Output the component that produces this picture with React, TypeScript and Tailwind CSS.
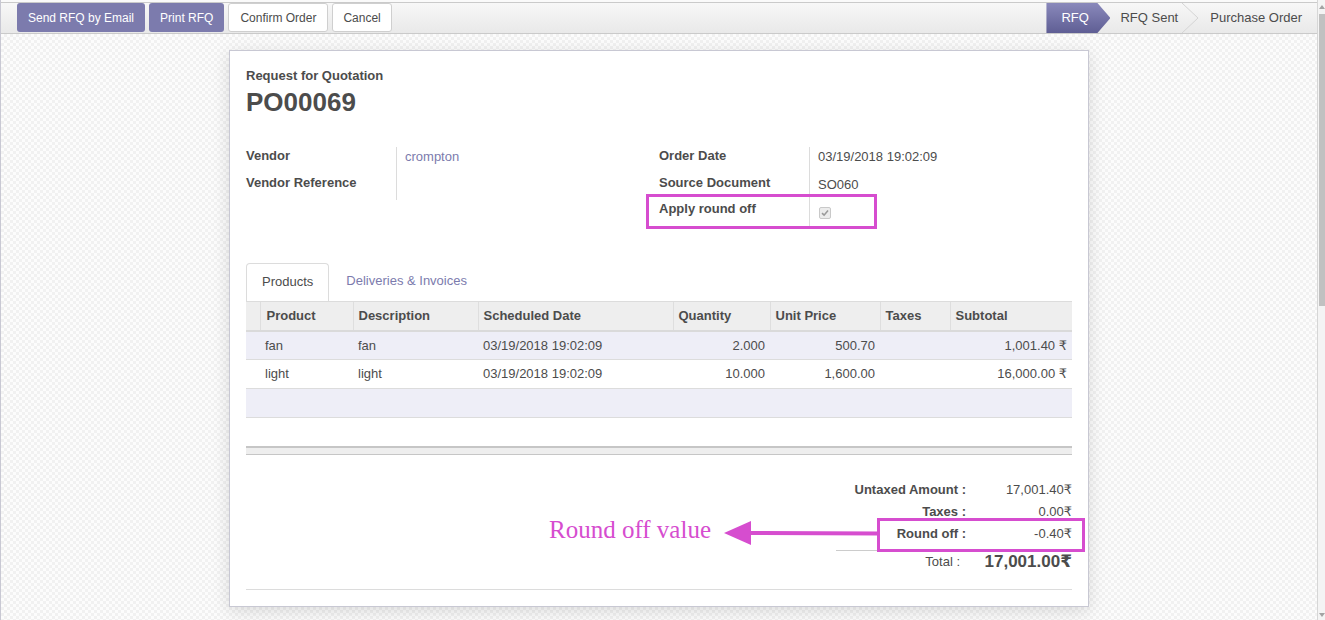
import React from "react";

const MAGENTA = "#d64dcf";

function TopBar() {
  return (
    <div className="h-[34px] flex flex-col">
      <div className="h-[2px] bg-[#fafafa]" />
      <div className="h-[32px] border-t border-b border-[#cacaca] bg-linear-to-b from-[#f7f7f7] to-[#e9e9e9] flex items-start justify-between">
        <div className="flex gap-[4px] pl-[16px] pt-0">
          <button className="h-[29px] px-[11px] rounded-[3px] bg-[#7c7bad] text-white text-[12px] leading-[30px]">
            Send RFQ by Email
          </button>
          <button className="h-[29px] px-[11px] rounded-[3px] bg-[#7c7bad] text-white text-[12px] leading-[30px]">
            Print RFQ
          </button>
          <button className="h-[29px] px-[11px] rounded-[3px] bg-white border border-[#cfcfcf] text-[#4c4c4c] text-[12px] leading-[28px]">
            Confirm Order
          </button>
          <button className="h-[29px] px-[10px] rounded-[3px] bg-white border border-[#cfcfcf] text-[#4c4c4c] text-[12px] leading-[28px]">
            Cancel
          </button>
        </div>
        <div className="flex h-[30px] items-stretch">
          <div className="w-[64px] bg-linear-to-b from-[#8a89bb] to-[#5f5e94] text-white text-[13px] leading-[30px] pl-[15px] [clip-path:polygon(0_0,51px_0,64px_50%,51px_100%,0_100%)]">
            RFQ
          </div>
          <div className="pl-[10px] pr-[2px] text-[13px] leading-[30px] text-[#4c4c4c]">RFQ Sent</div>
          <svg width="20" height="30" viewBox="0 0 20 30" className="block">
            <polyline points="2,0 18,15 2,30" fill="none" stroke="#d4d4d4" strokeWidth="1" />
          </svg>
          <div className="pl-[10px] pr-[15px] text-[13px] leading-[30px] text-[#4c4c4c]">Purchase Order</div>
        </div>
      </div>
    </div>
  );
}

function FieldRow({ label, children }: { label: string; children?: React.ReactNode }) {
  return (
    <div className="flex h-[26.5px]">
      <div className="w-[150px] font-bold leading-[18px]">{label}</div>
      <div className="flex-1 border-l border-[#dcdcdc] pl-[8px] leading-[20px]">{children}</div>
    </div>
  );
}

function ProductsTable() {
  const th = "h-[29px] text-left font-bold px-[5px] border-r border-[#dedede] align-middle";
  const td = "h-[29px] px-[5px] align-middle";
  return (
    <table className="w-full table-fixed border-collapse text-[13px]">
      <colgroup>
        <col className="w-[14px]" />
        <col className="w-[93px]" />
        <col className="w-[125px]" />
        <col className="w-[195px]" />
        <col className="w-[97px]" />
        <col className="w-[110px]" />
        <col className="w-[70px]" />
        <col className="w-[122px]" />
      </colgroup>
      <thead>
        <tr className="bg-[#eeeeee] border-b-2 border-[#dadada]">
          <th className={th}></th>
          <th className={th + " pl-[6px]"}>Product</th>
          <th className={th}>Description</th>
          <th className={th}>Scheduled Date</th>
          <th className={th}>Quantity</th>
          <th className={th}>Unit Price</th>
          <th className={th}>Taxes</th>
          <th className={th + " border-r-0"}>Subtotal</th>
        </tr>
      </thead>
      <tbody>
        <tr className="bg-[#eeeef7] border-b border-[#dcdcdc]">
          <td className={td}></td>
          <td className={td}>fan</td>
          <td className={td}>fan</td>
          <td className={td}>03/19/2018 19:02:09</td>
          <td className={td + " text-right"}>2.000</td>
          <td className={td + " text-right"}>500.70</td>
          <td className={td}></td>
          <td className={td + " text-right"}>1,001.40 ₹</td>
        </tr>
        <tr className="bg-white border-b border-[#dcdcdc]">
          <td className={td}></td>
          <td className={td}>light</td>
          <td className={td}>light</td>
          <td className={td}>03/19/2018 19:02:09</td>
          <td className={td + " text-right"}>10.000</td>
          <td className={td + " text-right"}>1,600.00</td>
          <td className={td}></td>
          <td className={td + " text-right"}>16,000.00 ₹</td>
        </tr>
        <tr className="bg-[#eeeef7] border-b border-[#dcdcdc]">
          <td className={td} colSpan={8}></td>
        </tr>
      </tbody>
    </table>
  );
}

function Sheet() {
  return (
    <div className="relative w-[860px] mx-auto mt-[16px] bg-white border border-[#c8c8d3] shadow-[0_4px_16px_rgba(0,0,0,0.13)] px-[16px] pt-[16px] pb-[16px]">
      <div className="h-[18px] leading-[18px] font-bold text-[13px]">Request for Quotation</div>
      <div className="h-[34px] leading-[34px] font-bold text-[26px]">PO00069</div>

      <div className="mt-[28px] flex">
        <div className="w-[413px]">
          <FieldRow label="Vendor">
            <span className="text-[#7c7bad]">crompton</span>
          </FieldRow>
          <FieldRow label="Vendor Reference" />
        </div>
        <div className="relative w-[413px]">
          <FieldRow label="Order Date">03/19/2018 19:02:09</FieldRow>
          <FieldRow label="Source Document">
            <span className="relative top-[1px]">SO060</span>
          </FieldRow>
          <FieldRow label="Apply round off">
            <div className="mt-[7px] ml-[1px] w-[12px] h-[12px] rounded-[2px] border border-[#c9c9c9] bg-[#ececec] flex items-center justify-center">
              <svg width="8" height="8" viewBox="0 0 8 8">
                <path d="M1 4.2 L3.1 6.2 L7 1.6" fill="none" stroke="#9a9a9a" strokeWidth="1.6" />
              </svg>
            </div>
          </FieldRow>
          <div className="absolute left-[-13px] top-[47px] w-[231px] h-[35px] border-[3px] border-[#d64dcf]" />
        </div>
      </div>

      <div className="mt-[36px] flex h-[38px] items-stretch">
        <div className="px-[15px] border border-b-0 border-[#dcdcdc] rounded-t-[4px] leading-[36px] bg-white">Products</div>
        <div className="ml-[2px] px-[15px] leading-[36px] text-[#7c7bad]">Deliveries &amp; Invoices</div>
      </div>
      <div className="border-t border-[#dcdcdc]">
        <ProductsTable />
      </div>

      <div className="mt-[28px] h-[9px] border-t-2 border-b border-[#c6c6c6] bg-[#eeeeee]" />

      <div className="mt-[24px] ml-auto w-[236px] text-[13px]">
        <div className="flex h-[22px] leading-[22px]">
          <div className="w-[130px] text-right font-bold whitespace-nowrap">Untaxed Amount :</div>
          <div className="flex-1 text-right">17,001.40₹</div>
        </div>
        <div className="flex h-[22px] leading-[22px]">
          <div className="w-[130px] text-right font-bold">Taxes :</div>
          <div className="flex-1 text-right">0.00₹</div>
        </div>
        <div className="flex h-[22px] leading-[22px]">
          <div className="w-[130px] text-right font-bold">Round off :</div>
          <div className="flex-1 text-right">-0.40₹</div>
        </div>
        <div className="mt-[5px] border-t border-[#cccccc]" />
        <div className="flex h-[22px] leading-[22px]">
          <div className="w-[130px] text-right pr-[6px]">Total :</div>
          <div className="flex-1 text-right font-bold text-[17px]">17,001.00₹</div>
        </div>
      </div>

      <div className="mt-[16px] border-t border-[#dcdcdc]" />

      {/* annotations */}
      <div className="absolute left-[647px] top-[467px] w-[208px] h-[34px] border-[3px] border-[#d64dcf]" />
      <svg className="absolute left-[494px] top-[467px]" width="155" height="30" viewBox="0 0 155 30">
        <polygon points="0,15 27,3 27,27" fill={MAGENTA} />
        <line x1="24" y1="15" x2="155" y2="15.6" stroke={MAGENTA} strokeWidth="4" />
      </svg>
      <div
        className="absolute left-[319px] top-[464px] text-[25px] leading-[30px] text-[#d64dcf] font-['Liberation_Serif',serif] whitespace-nowrap"
      >
        Round off value
      </div>
    </div>
  );
}

export default function App() {
  return (
    <div className="w-[1325px] h-[620px] overflow-hidden flex bg-white text-[13px] text-[#4c4c4c] font-['Liberation_Sans','DejaVu_Sans',sans-serif]">
      <div className="flex-1 flex flex-col border-l border-[#c8c8d3] min-w-0">
        <TopBar />
        <div className="flex-1 [background-image:repeating-conic-gradient(#f1f1f1_0%_25%,#fcfcfc_0%_50%)] [background-size:6px_6px]">
          <Sheet />
        </div>
      </div>
      <div className="w-[8px] border-l border-[#d6d6d6] bg-[#f4f4f4] flex flex-col items-center">
        <div className="h-[14px] flex items-center justify-center">
          <svg width="6" height="4" viewBox="0 0 6 4">
            <polygon points="3,0 6,4 0,4" fill="#a3a3a3" />
          </svg>
        </div>
        <div className="w-[6px] h-[292px] bg-[#c1c1c1]" />
        <div className="flex-1" />
        <div className="h-[10px] flex items-center justify-center">
          <svg width="6" height="4" viewBox="0 0 6 4">
            <polygon points="0,0 6,0 3,4" fill="#a3a3a3" />
          </svg>
        </div>
      </div>
    </div>
  );
}
